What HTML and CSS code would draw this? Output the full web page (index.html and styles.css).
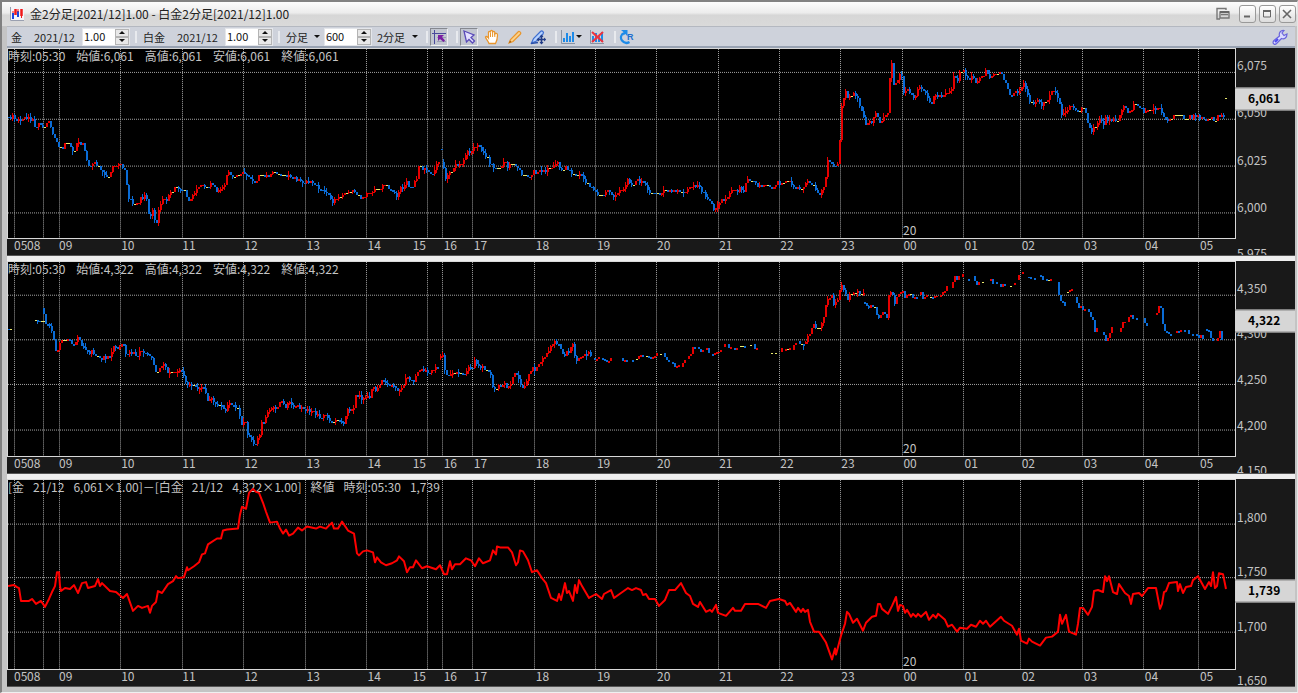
FILE: index.html
```html
<!DOCTYPE html>
<html lang="ja">
<head>
  <meta charset="UTF-8">
  <title>金2分足[2021/12]1.00 - 白金2分足[2021/12]1.00</title>
  <link rel="stylesheet" href="styles.css">
</head>
<body>

  <div class="window">
    <div class="titlebar">
      <svg class="app-icon" viewBox="0 0 14 14">
        <rect x="0" y="0" width="14" height="14" fill="#f4f4f8"/>
        <path d="M0.5 0V13.5H14" stroke="#9aa0b0" fill="none"/>
        <path d="M3 6V12M8 4V10" stroke="#1848e0" stroke-width="2"/>
        <path d="M5.5 2V8M11.500 2V9" stroke="#f01818" stroke-width="2.500"/>
        <path d="M3 4V6M8 2V5M11.500 9V11" stroke="#f01818" stroke-width="1"/>
      </svg>
      <h1>金2分足[2021/12]1.00 - 白金2分足[2021/12]1.00</h1>
      <div class="window-buttons">
        <button class="popout" aria-label="別ウィンドウ">
          <svg viewBox="0 0 14 14"><path d="M10 3V1.5H1V12H4M4 5H13V11H4ZM5 7.5H12" stroke="#777" stroke-width="1.4" fill="none"/><path d="M4 5H13" stroke="#666" stroke-width="2"/></svg>
        </button>
        <button aria-label="最小化"><svg viewBox="0 0 14 14"><path d="M4 9.5H10" stroke="#666" stroke-width="2"/></svg></button>
        <button aria-label="最大化"><svg viewBox="0 0 14 14"><path d="M3.5 4H10.5V10H3.5Z" stroke="#666" fill="none"/><path d="M3 4H11" stroke="#666" stroke-width="2"/></svg></button>
        <button aria-label="閉じる"><svg viewBox="0 0 14 14"><path d="M3 3L11 11M11 3L3 11" stroke="#666" stroke-width="1.6"/></svg></button>
      </div>
    </div>

    <div class="toolbar">
      <label for="goldRatio">金</label>
      <span class="month">2021/12</span>
      <div class="spin">
        <input type="text" id="goldRatio" value="1.00">
        <div class="spin-buttons"><button class="up" aria-label="増やす"></button><button class="down" aria-label="減らす"></button></div>
      </div>
      <span class="sep"></span>
      <label for="platinumRatio">白金</label>
      <span class="month">2021/12</span>
      <div class="spin">
        <input type="text" id="platinumRatio" value="1.00">
        <div class="spin-buttons"><button class="up" aria-label="増やす"></button><button class="down" aria-label="減らす"></button></div>
      </div>
      <span class="sep"></span>
      <div class="drop">
        <select aria-label="足種"><option>分足</option></select>
      </div>
      <div class="spin">
        <input type="text" aria-label="本数" value="600">
        <div class="spin-buttons"><button class="up" aria-label="増やす"></button><button class="down" aria-label="減らす"></button></div>
      </div>
      <div class="drop interval">
        <select aria-label="間隔"><option>2分足</option></select>
      </div>
      <span class="sep tool-sep"></span>
      <button class="tool pressed" aria-label="クロスカーソル">
        <svg viewBox="0 0 16 16"><path d="M6 8.500H15M6 12.500H15" stroke="#9aa0b4" fill="none"/><path d="M3.500 1V15M1 4.500H15" stroke="#4b4a9c" fill="none"/><path d="M7 6H13L11 8L14 11.500L12.500 13L9 10L7 12Z" fill="#7a1fa2"/></svg>
      </button>
      <span class="sep tool-sep"></span>
      <div class="tools">
        <button class="tool pressed" aria-label="選択">
          <svg viewBox="0 0 16 16"><path d="M3 2L13 6L10 8.500L13.500 12L11.500 14L8 10.500L5.500 13Z" fill="#e4e0ff" stroke="#5a4bb8" stroke-width="1.300"/></svg>
        </button>
        <button class="tool" aria-label="移動">
          <svg viewBox="0 0 16 16"><path d="M5 14.500C4 11.500 1.500 9.500 1.500 8C2 7 3.500 7.500 4.500 9V3.500C4.500 2 6.300 2 6.500 3.500V2.500C6.500 1 8.500 1 8.600 2.500V3.200C9 2 10.700 2 10.800 3.500V5C11.500 4 13.500 4 13.500 6C13.500 9 13.500 11 11.500 14.500Z" fill="#fff" stroke="#e8962e" stroke-width="1.300"/><path d="M6.500 3.500V8M8.600 3V8M10.800 4V8" stroke="#e8962e"/></svg>
        </button>
        <button class="tool" aria-label="描画">
          <svg viewBox="0 0 16 16"><path d="M2 14L3.500 10.500L11 3C12 1.500 14.500 3.500 13.500 5L6 12.500Z" fill="#fbd28c" stroke="#e8962e" stroke-width="1.200"/><path d="M2 14L3 11.500L4.500 13Z" fill="#a05a10"/></svg>
        </button>
        <button class="tool" aria-label="描画移動">
          <svg viewBox="0 0 16 16"><path d="M1.500 14L3.500 9.500L10.500 2.500C12 1 14.500 3 13 5L6.500 12Z" fill="#b6d2ff" stroke="#3f6fd0" stroke-width="1.200"/><path d="M1 14.500L8 13.500" stroke="#2a4fa8" stroke-width="1.500"/><path d="M11.500 6.500V14.500M7.500 10.500H15.500" stroke="#223c86" stroke-width="1.600"/><path d="M11.500 5.500L13.500 8H9.500ZM11.500 15.500L9.500 13H13.500ZM6.500 10.500L9 8.500V12.500ZM16 10.500L14 8.500V12.500Z" fill="#223c86"/></svg>
        </button>
      </div>
      <span class="sep tool-sep"></span>
      <div class="tools">
        <button class="tool menu" aria-label="テクニカル">
          <svg viewBox="0 0 16 16"><path d="M1.500 1V14.500H15" stroke="#8a94a4" fill="none"/><path d="M4 9V13M7 4V13M10 7V13M13 3V13" stroke="#1e8be8" stroke-width="2"/></svg>
        </button>
        <button class="tool" aria-label="テクニカル削除">
          <svg viewBox="0 0 16 16"><path d="M1.500 1V14.500H15" stroke="#8a94a4" fill="none"/><path d="M4 7V13M7 4V13M10 7V13M13 3V13" stroke="#1e8be8" stroke-width="2"/><path d="M3 3L14 13M14 3L3 13" stroke="#f0323c" stroke-width="2"/></svg>
        </button>
      </div>
      <span class="sep tool-sep"></span>
      <button class="tool" aria-label="リロード">
        <svg viewBox="0 0 16 16"><path d="M5 4C2 5 1 9 3 11.500C5 14 8 14.500 10.500 13" stroke="#1e8be8" stroke-width="2.200" fill="none"/><path d="M2 1H8.500V7.500L6.500 5L4 6.500L5 3.500Z" fill="#1e8be8"/><text x="8" y="11" class="icon-letter">R</text></svg>
      </button>
      <button class="tool settings" aria-label="設定">
        <svg viewBox="0 0 16 16"><path d="M2 15C0.500 14 1 12.500 2 11.500L7.500 7C6.500 3.500 9 1 12 1.500L10 4L12 6.500L15 5C15 8.500 12.500 10.500 9.500 9.500L4.500 14.500C3.500 15.500 2.500 15.500 2 15Z" fill="#dcdcff" stroke="#6a64dc" stroke-width="1.200"/><path d="M3 13L6 10" stroke="#4a48f0" stroke-width="2"/></svg>
      </button>
    </div>

    <div class="panes">
      <div class="pane" id="gold">
        <div class="plot">
          <div class="legend"><span>時刻:05:30</span><span>始値:6,061</span><span>高値:6,061</span><span>安値:6,061</span><span>終値:6,061</span></div>
        </div>
        <div class="price-axis"><div class="last-price">6,061</div></div>
        <div class="time-axis"></div>
      </div>

      <div class="pane tall" id="platinum">
        <div class="plot">
          <div class="legend"><span>時刻:05:30</span><span>始値:4,322</span><span>高値:4,322</span><span>安値:4,322</span><span>終値:4,322</span></div>
        </div>
        <div class="price-axis"><div class="last-price">4,322</div></div>
        <div class="time-axis"></div>
      </div>

      <div class="pane" id="spread">
        <div class="plot">
          <div class="legend narrow"><span>[金</span><span>21/12</span><span>6,061×1.00]－[白金</span><span>21/12</span><span>4,322×1.00]</span><span>終値</span><span>時刻:05:30</span><span>1,739</span></div>
        </div>
        <div class="price-axis"><div class="last-price">1,739</div></div>
        <div class="time-axis"></div>
      </div>
    </div>
  </div>

  <script src="chart.js"></script>
</body>
</html>
```
FILE: styles.css
```css
* {
  box-sizing: border-box;
  margin: 0;
  padding: 0;
}

body {
  height: 100vh;
  min-width: 700px;
  font-family: "Noto Sans CJK JP", "Noto Sans", sans-serif;
  font-size: 11px;
  line-height: 16px;
  color: #222;
  overflow: hidden;
}

button {
  border: none;
  background: none;
}

.window {
  height: 100%;
  display: flex;
  flex-direction: column;
  background: #c4c4c4;
  border-top: 2px solid #828282;
  border-left: 2px solid #808080;
  border-right: 1px solid #e4e4e4;
  border-bottom: 1px solid #f0f0f0;
  padding: 0 2px 5px 5px;
}

/* Title bar */
.titlebar {
  height: 24px;
  flex-shrink: 0;
  display: flex;
  align-items: center;
  margin-left: -5px;
  margin-right: -2px;
  padding: 0 1px 0 8px;
  background: linear-gradient(#fcfcfc, #ececec 45%, #d6d6d6 55%, #dadada);
}

.app-icon {
  width: 14px;
  height: 14px;
  margin-right: 6px;
}

.titlebar h1 {
  font-size: 12px;
  font-weight: normal;
}

.window-buttons {
  margin-left: auto;
  display: flex;
  gap: 3px;
}

.window-buttons button {
  width: 17px;
  height: 18px;
  border: 1px solid #999;
  border-radius: 3px;
  background: linear-gradient(#fff, #ddd);
}

.window-buttons .popout {
  border-color: transparent;
  background: none;
  margin-right: 4px;
}

.window-buttons svg {
  display: block;
  width: 14px;
  height: 14px;
}

/* Toolbar */
.toolbar {
  height: 22px;
  flex-shrink: 0;
  display: flex;
  align-items: center;
  padding: 0 6px 0 4px;
  background: #ced2db;
  border-top: 1px solid #b4b8c0;
  border-bottom: 2px solid #98a2b2;
}

.month {
  margin: 0 7px 0 12px;
}

.spin {
  display: flex;
  width: 48px;
  height: 18px;
  background: #fff;
  border: 1px solid #e4e6ea;
}

.spin input {
  width: 32px;
  height: 14px;
  border: none;
  background: none;
  padding-left: 1px;
  font: inherit;
  line-height: 14px;
  color: #111;
}

.spin-buttons {
  display: flex;
  flex-direction: column;
  flex: 1;
}

.spin-buttons button {
  flex: 1;
  display: flex;
  align-items: center;
  justify-content: center;
  background: #e8e8e8;
  border: 1px solid #b4b4b4;
}

.spin-buttons button::after,
.drop::after,
.menu::after {
  content: "";
  border-left: 3px solid transparent;
  border-right: 3px solid transparent;
}

.spin-buttons .up::after {
  border-bottom: 3px solid #111;
}

.spin-buttons .down::after,
.drop::after,
.menu::after {
  border-top: 3px solid #111;
}

.sep {
  width: 2px;
  height: 12px;
  margin: 0 6px 0 5px;
  background: #e8eaee;
}

.tool-sep {
  margin: 0 2px 0 8px;
}

.drop {
  display: flex;
  align-items: center;
  gap: 6px;
  margin-right: 4px;
}

.drop select {
  appearance: none;
  border: none;
  background: none;
  font: inherit;
  color: inherit;
}

.interval {
  margin-left: 5px;
  margin-right: 0;
}

.tools {
  display: flex;
  gap: 5px;
}

.tool {
  width: 18px;
  height: 18px;
  border: 1px solid transparent;
  display: flex;
  align-items: center;
}

.tool svg {
  display: block;
  width: 16px;
  height: 16px;
  flex-shrink: 0;
}

.tool.menu {
  width: 24px;
}

.pressed {
  background: #c2c6d0;
  border-color: #85888f #eee #eee #85888f;
}

.icon-letter {
  font: bold 9px "Liberation Sans", sans-serif;
  fill: #1e6fd0;
}

.settings {
  margin-left: auto;
}

/* Chart panes */
.panes {
  flex: 1;
  min-height: 0;
  display: flex;
  flex-direction: column;
  gap: 5px;
  background: #eee;
}

.pane {
  flex: 208 1 0;
  min-height: 0;
  display: grid;
  grid-template-columns: 1fr 59px;
  grid-template-rows: 1fr 16px;
  position: relative;
  overflow: hidden;
  background: #191919;
  color: #c4c4c4;
  font-size: 12px;
  border-bottom: 1px solid #555;
}

.pane.tall {
  flex-grow: 212;
}

.plot {
  position: relative;
  min-height: 0;
  background: #000;
  border: 1px solid #d8d8d8;
}

.plot svg {
  display: block;
  position: absolute;
  top: 0;
  left: 0;
  width: 100%;
  height: 100%;
}

.legend {
  display: flex;
  gap: 11px;
  line-height: 14px;
  white-space: nowrap;
}

.legend.narrow {
  gap: 9px;
}

.price-axis,
.time-axis {
  position: relative;
}

.price-label,
.time-label,
.day-label {
  position: absolute;
  line-height: 12px;
}

.price-label {
  left: 1px;
  transform: translateY(-50%);
}

.time-label {
  top: 0;
}

.day-label {
  bottom: 2px;
}

.last-price {
  position: absolute;
  z-index: 1;
  left: -1px;
  right: 0;
  height: 23px;
  padding-left: 13px;
  line-height: 18px;
  font-weight: bold;
  color: #000;
  background: #d6d6d6;
  border-top: 1px solid #888;
  border-bottom: 1px solid #888;
  transform: translateY(-50%);
}

.grid-line {
  stroke: #a4a4a4;
  stroke-width: 1;
  stroke-dasharray: 1 1;
}

.bar {
  shape-rendering: crispEdges;
}

.bar.up { fill: #e60000; }
.bar.down { fill: #0a6cd6; }
.bar.flat { fill: #eaea6e; }

.spread-line {
  fill: none;
  stroke: #ff0000;
  stroke-width: 2;
  stroke-linejoin: round;
}
```
FILE: chart.js
```js
// All panes share one drawing space, x runs from LEFT over WIDTH units
const LEFT = 8;
const WIDTH = 1227;
const SVG_NS = "http://www.w3.org/2000/svg";

const hours = [14, 43, 59, 120, 182, 243, 305, 366, 427, 442, 472, 534, 595, 656,
  718, 779, 840, 902, 963, 1020, 1082, 1143, 1198];

const timeLabels = [[15, "05"], [28, "08"], [60, "09"], [122, "10"], [183, "11"], [245, "12"],
  [307, "13"], [368, "14"], [413, "15"], [444, "16"], [474, "17"], [536, "18"], [597, "19"],
  [657, "20"], [719, "21"], [780, "22"], [841, "23"], [903, "00"], [964, "01"], [1021, "02"],
  [1083, "03"], [1144, "04"], [1199, "05"]];

// "x,y" turning points, "|" is a break in trading
const goldPath = `8,118 14,116 17,119 33,119 35,127 40,121 42,127 49,122 54,135 60,150 63,147 68,141
74,155 78,141 83,146 89,167 95,162 100,169 106,177 109,177 113,167 120,164 124,166 129,198 133,204
137,205 141,198 148,198 149,215 154,213 156,227 159,212 161,203 167,200 175,187 182,188 185,193
190,203 193,195 202,184 207,187 212,182 217,190 224,188 229,171 235,178 243,172 255,181 262,174
268,178 273,171 283,176 295,177 301,182 312,182 320,188 327,193 333,202 340,198 353,190 361,200
367,194 375,189 387,185 397,198 400,187 403,188 407,183 412,188 417,177 419,165 423,170 428,168
433,176 437,163 439,161 | 441,150 442,150 | 443,162 446,177 453,170 456,164 460,166 467,154 472,150
475,145 478,145 482,149 488,158 493,167 497,169 505,163 508,166 513,162 518,169 524,175 529,177
534,171 542,172 550,168 558,163 563,173 566,168 572,172 576,176 580,172 585,182 590,185 595,190
601,198 605,193 609,190 613,197 624,191 628,181 633,183 640,181 646,185 651,197 655,193 659,195
665,191 675,191 685,193 690,187 698,185 705,195 710,201 713,210 718,208 721,200 727,200 732,190
737,193 741,188 743,193 747,180 753,181 758,186 770,184 773,188 778,183 781,185 787,180 793,183
797,189 803,189 807,181 813,183 817,192 820,196 824,187 827,175 828,162 831,161 835,168 839,166
841,113 843,102 846,92 849,100 854,93 859,102 863,115 867,125 872,122 877,113 880,125 884,118
888,115 890,78 892,63 894,85 897,82 899,76 902,77 904,93 909,88 915,101 918,88 923,88 928,97
932,103 934,95 940,95 947,94 952,88 954,75 958,83 960,73 965,71 967,80 973,77 977,84 982,76 986,71
989,78 993,75 999,73 1004,78 1008,90 1011,96 1015,92 1020,91 1023,84 1027,91 1030,102 1033,105
1037,100 1042,104 1047,103 1050,93 1055,89 1059,98 1062,117 1067,112 1071,103 1077,113 1082,107
1085,108 1088,122 1092,130 1097,123 1099,119 1104,122 1107,117 1109,122 1113,117 1118,123 1122,110
1125,107 1128,113 1137,103 1145,112 1158,107 1164,117 1168,121 1175,113 1183,118 1198,116 1207,120
1217,118 1221,116 1224,118 | 1225,99 1226,99`;

const platinumPath = `8,330 11,330 | 19,320 30,320 | 35,321 43,322 | 43,308 45,322 49,327 53,335 57,355 61,342 65,343
69,340 74,348 78,337 82,348 90,354 93,352 98,359 105,359 110,356 113,350 123,344 127,358 131,352
137,357 142,351 148,354 153,363 157,374 161,368 165,364 167,373 173,372 183,372 186,384 192,387
200,389 205,390 208,400 213,400 217,408 221,405 226,412 229,403 235,408 239,410 241,426 246,423
248,435 254,447 260,438 262,425 266,418 270,410 277,409 281,402 286,408 289,402 295,408 305,410
313,412 321,418 325,415 332,423 337,418 344,423 348,411 354,410 356,397 360,397 363,401 370,398
373,387 377,391 382,383 387,382 398,392 405,385 407,373 409,381 413,383 419,370 427,372 433,373
437,369 | 440,359 443,358 445,370 448,378 452,372 463,375 468,369 473,368 475,361 479,368 487,370
491,375 493,388 497,388 505,385 507,388 512,382 515,372 520,383 523,390 528,380 532,370 535,371
545,358 553,343 560,345 564,358 567,350 569,355 573,345 575,357 577,362 582,358 589,352 593,360
600,358 607,363 613,359 623,362 637,359 642,357 651,359 657,354 663,355 668,362 677,368 683,365
690,357 693,349 697,346 700,352 704,349 709,352 713,357 718,352 725,347 733,349 740,346 747,348
753,346 758,351 | 767,351 777,354 782,351 792,349 795,343 805,345 810,333 813,325 817,329 821,328
824,318 827,302 832,294 834,305 838,302 841,285 844,291 848,298 853,292 863,293 | 864,302 868,308
875,306 877,315 879,318 883,313 887,318 889,295 892,290 894,303 898,297 903,290 905,298 909,292
915,299 921,291 923,298 928,297 937,298 942,293 947,288 952,288 954,275 958,279 964,273 967,280
973,278 977,285 982,280 990,279 995,283 1010,288 1016,283 1018,278 1021,272 1025,270 | 1028,277
1037,278 1039,274 1043,279 1052,280 1057,282 1060,298 1065,306 | 1067,292 1073,288 | 1076,297
1079,307 1083,308 1088,311 1093,322 1095,332 1099,326 | 1103,333 1106,342 1109,337 1112,328 |
1118,335 1122,325 1126,322 1131,316 1133,320 1142,318 1147,326 | 1156,314 1159,307 1161,310
1163,327 1167,333 1170,335 1180,333 | 1184,331 1192,336 1202,338 | 1204,329 1209,332 1212,342 |
1217,342 1220,332 1222,341 | 1223,330 1224,330 | 1225,320 1226,320`;

const spreadPath = `8,587 14,586 17,588 19,589 21,602 29,602 32,600 36,605 41,602 45,608 49,600 52,593 55,587 57,573
59,573 60,587 61,592 65,589 70,590 74,586 78,594 82,584 86,583 88,589 95,587 98,580 100,587 102,584
110,592 116,593 123,599 127,595 133,612 138,607 142,609 148,607 150,614 152,607 156,603 158,592
162,594 168,585 173,582 176,577 178,579 184,578 187,568 188,571 194,567 199,563 202,555 205,554
208,545 217,539 221,539 223,531 227,530 238,529 240,515 242,507 246,509 249,493 253,489 256,492
259,493 263,503 266,512 270,523 277,522 280,529 283,534 286,530 289,536 293,534 298,528 302,531
307,527 316,529 320,527 326,529 332,523 334,529 338,529 342,522 348,531 354,534 357,554 359,556
363,552 367,551 373,553 375,563 377,558 381,563 386,566 392,564 397,561 399,557 404,562 407,573
410,568 413,568 416,561 422,569 427,567 436,570 440,566 444,575 447,575 450,562 452,570 455,565
460,565 466,559 471,561 475,567 479,559 483,564 490,561 493,551 496,555 497,547 500,548 508,548
512,553 516,566 518,563 520,551 523,552 528,561 532,573 537,571 542,579 546,584 551,599 557,602
559,595 561,601 565,584 567,594 569,592 573,602 575,586 577,594 579,581 582,587 589,599 596,595
602,600 604,595 611,591 614,599 621,594 628,589 632,591 636,589 641,591 643,596 646,595 649,600
655,600 659,607 665,601 669,591 675,591 681,584 686,594 690,597 693,605 698,608 700,603 706,613
710,611 712,613 716,606 718,614 726,617 733,609 735,612 741,612 745,605 751,605 758,605 766,609
770,602 779,600 785,602 787,606 790,604 796,613 798,609 801,613 803,610 805,613 808,611 810,623
814,633 819,633 826,644 832,661 835,650 836,656 841,637 845,625 847,613 849,615 853,624 857,620
863,632 866,624 872,618 876,617 878,605 880,605 882,610 888,615 892,607 896,598 898,612 900,606
903,607 905,614 907,611 911,618 913,615 916,618 918,615 921,618 926,613 929,621 933,616 936,619
938,615 945,621 948,628 952,626 957,633 960,629 967,630 971,626 976,628 980,622 983,625 986,622
990,628 1001,618 1004,622 1012,627 1017,636 1019,630 1021,642 1027,645 1029,640 1032,643 1040,647
1046,639 1052,638 1058,633 1060,616 1062,625 1066,616 1069,633 1076,636 1078,625 1080,609 1083,609
1088,616 1092,608 1094,592 1098,591 1103,593 1105,577 1107,582 1109,577 1113,593 1117,595 1119,585
1125,594 1129,597 1131,605 1133,595 1139,594 1142,597 1148,589 1156,589 1160,610 1162,605 1164,593
1166,592 1169,584 1177,583 1178,592 1180,585 1183,594 1186,588 1191,587 1193,581 1198,577 1205,590
1209,583 1211,587 1213,573 1215,589 1217,587 1219,574 1223,575 1226,590`;

const panes = [
  {
    id: "gold", top: 49, height: 190, last: 100, path: goldPath, tick: 1.88, base: 119,
    lines: [72, 119, 166, 213],
    prices: [[66, "6,075"], [113, "6,050"], [160, "6,025"], [207, "6,000"], [253, "5,975"]]
  },
  {
    id: "platinum", top: 262, height: 195, last: 322, path: platinumPath, tick: 0.91, base: 340,
    lines: [295, 340, 385, 431], thinFrom: 590,
    prices: [[289, "4,350"], [334, "4,300"], [379, "4,250"], [425, "4,200"], [470, "4,150"]]
  },
  {
    id: "spread", top: 480, height: 191, last: 592, path: spreadPath,
    lines: [524, 578, 633],
    prices: [[518, "1,800"], [572, "1,750"], [627, "1,700"], [681, "1,650"]]
  }
];

function add(svg, tag, cls, attrs) {
  const el = document.createElementNS(SVG_NS, tag);
  el.setAttribute("class", cls);
  for (const key in attrs) el.setAttribute(key, attrs[key]);
  svg.appendChild(el);
}

function addLabel(parent, cls, text, side, percent) {
  const el = document.createElement("span");
  el.className = cls;
  el.textContent = text;
  el.style[side] = percent + "%";
  parent.appendChild(el);
}

function parse(run) {
  return run.trim().split(/\s+/).map(p => p.split(",").map(Number));
}

// Height of the turning-point line at x
function valueAt(points, x) {
  for (let i = 1; i < points.length; i++) {
    const [x0, y0] = points[i - 1];
    const [x1, y1] = points[i];
    if (x <= x1) return y0 + (y1 - y0) * Math.max(0, x - x0) / (x1 - x0);
  }
  return points[points.length - 1][1];
}

function noise(n) {
  const s = Math.sin(n * 12.9898) * 43758.5453;
  return s - Math.floor(s);
}

function drawBars(svg, pane) {
  const d = { up: "", down: "", flat: "" };
  pane.path.split("|").forEach(run => {
    const points = parse(run);
    const end = points[points.length - 1][0];
    const snap = v => pane.base + Math.round((v - pane.base) / pane.tick) * pane.tick;
    let open = snap(points[0][1]);
    let last = "down";
    for (let x = points[0][0]; x <= end; x += 2) {
      const wobble = end - points[0][0] > 12 ? (noise(x) - 0.5) * 4 : 0;
      const close = snap(valueAt(points, x + 1) + wobble);
      const moved = Math.abs(close - open) > 0.5;
      let kind = close < open ? "up" : "down";
      if (!moved) kind = noise(x + 5) < 0.6 ? "flat" : last;
      const thin = pane.thinFrom && x > pane.thinFrom && (x < 800 || x > 900);
      if (!(thin && Math.abs(close - open) < 3 && noise(x + 7) < 0.4)) {
        const high = Math.round(Math.min(open, close));
        const low = Math.max(high + (moved ? 2 : 1), Math.round(Math.max(open, close)));
        d[kind] += `M${x} ${high}h2v${low - high}h-2z`;
        if (moved && !thin && noise(x + 3) > 0.4) {
          const up = Math.round(noise(x + 11) * 4);
          const down = Math.round(noise(x + 17) * 4);
          d[kind] += `M${x} ${high - up}h1V${low + down}h-1z`;
        }
      }
      if (kind !== "flat") last = kind;
      open = close;
    }
  });
  for (const kind in d) add(svg, "path", "bar " + kind, { d: d[kind] });
}

panes.forEach(pane => {
  const root = document.getElementById(pane.id);
  const plot = root.querySelector(".plot");
  const svg = document.createElementNS(SVG_NS, "svg");
  svg.setAttribute("viewBox", `${LEFT} ${pane.top} ${WIDTH} ${pane.height}`);
  svg.setAttribute("preserveAspectRatio", "none");
  const toTop = y => (y - pane.top) / pane.height * 100;
  const toLeft = x => (x - LEFT) / WIDTH * 100;

  pane.lines.forEach(y => {
    add(svg, "line", "grid-line", { x1: LEFT, x2: LEFT + WIDTH, y1: y + 0.5, y2: y + 0.5 });
  });
  hours.forEach(x => {
    add(svg, "line", "grid-line", { x1: x + 0.5, x2: x + 0.5, y1: pane.top, y2: pane.top + pane.height });
  });

  if (pane.tick) {
    drawBars(svg, pane);
  } else {
    const points = parse(pane.path).map(p => p.join(",")).join(" ");
    add(svg, "polyline", "spread-line", { points: points });
  }
  plot.appendChild(svg);
  addLabel(plot, "day-label", "20", "left", toLeft(903));

  const priceAxis = root.querySelector(".price-axis");
  pane.prices.forEach(([y, text]) => addLabel(priceAxis, "price-label", text, "top", toTop(y)));
  root.querySelector(".last-price").style.top = toTop(pane.last) + "%";

  const timeAxis = root.querySelector(".time-axis");
  timeLabels.forEach(([x, text]) => addLabel(timeAxis, "time-label", text, "left", toLeft(x)));
});
```
